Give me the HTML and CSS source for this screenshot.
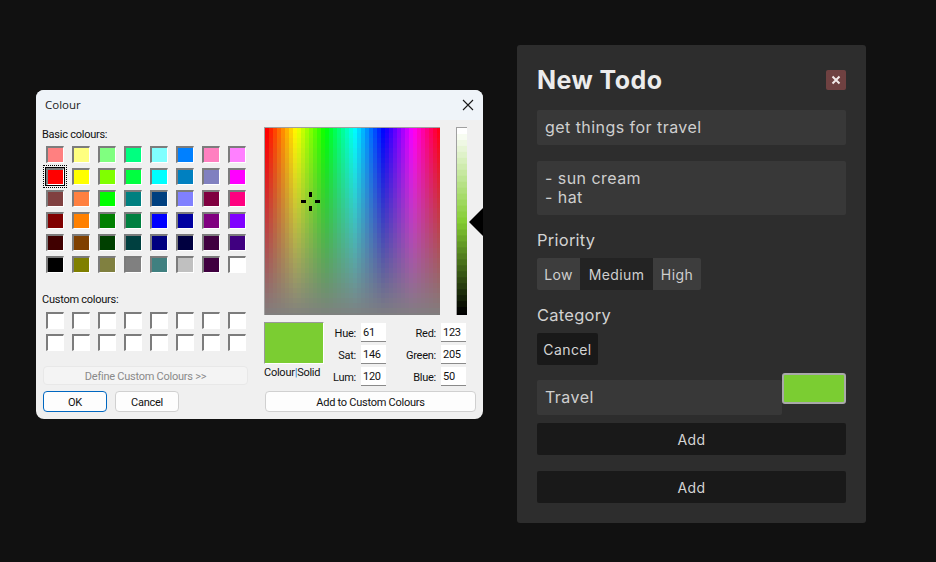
FILE: index.html
```html
<!DOCTYPE html>
<html lang="en">
  <head>
    <meta charset="UTF-8" />
    <meta name="viewport" content="width=device-width, initial-scale=1.0" />
    <title>New Todo</title>
    <link rel="stylesheet" href="styles.css">
  </head>
  <body>
    <div class="panel">
      <div class="panel-head">
        <h1>New Todo</h1>
        <button type="button" class="close-btn">
          <svg width="10" height="10" viewBox="0 0 10 10"><path d="M1.5 1.5l7 7M8.5 1.5l-7 7" stroke="#f2e8e8" stroke-width="2" /></svg>
        </button>
      </div>
      <div class="field field-title">get things for travel</div>
      <div class="field field-notes">- sun cream<br />- hat</div>
      <div class="label label-priority">Priority</div>
      <div class="segments">
        <button type="button" class="seg seg-low">Low</button>
        <button type="button" class="seg seg-medium selected">Medium</button>
        <button type="button" class="seg seg-high">High</button>
      </div>
      <div class="label label-category">Category</div>
      <button type="button" class="dark-btn cancel-btn">Cancel</button>
      <div class="category-row">
        <div class="field field-category">Travel</div>
        <div class="colour-well"></div>
      </div>
      <button type="button" class="dark-btn wide-btn">Add</button>
      <button type="button" class="dark-btn wide-btn second">Add</button>
    </div>

    <div class="dialog">
      <div class="titlebar">
        <span>Colour</span>
        <svg width="12" height="12" viewBox="0 0 12 12"><path d="M1 1l10 10M11 1L1 11" stroke="#1a1a1a" stroke-width="1.1" /></svg>
      </div>
      <div class="dialog-body">
        <div class="col-left">
          <div class="dlg-label">Basic colours:</div>
          <div id="basic-grid" class="swatches basic"></div>
          <div class="dlg-label custom-label">Custom colours:</div>
          <div id="custom-grid" class="swatches custom"></div>
          <button type="button" class="win-btn define-btn" disabled>Define Custom Colours &gt;&gt;</button>
          <div class="ok-row">
            <button type="button" class="win-btn ok-btn">OK</button>
            <button type="button" class="win-btn cancel-win">Cancel</button>
          </div>
        </div>
        <div class="col-right">
          <div class="picker-row">
            <div class="spectrum">
              <canvas id="spectrum" class="spectrum-canvas" width="175" height="187"></canvas>
              <svg class="crosshair" width="19" height="19" viewBox="0 0 19 19"><path d="M8 0h3v5H8zM8 14h3v5H8zM0 8h5v3H0zM14 8h5v3h-5z" /></svg>
            </div>
            <canvas id="lum" class="lum" width="11" height="188"></canvas>
          </div>
          <div class="values-row">
            <div class="preview-box">
              <div class="preview"></div>
              <div class="preview-label">Colour<span class="pipe">|</span>Solid</div>
            </div>
            <div class="values">
              <label>Hue:</label><div class="num">61</div>
              <label>Red:</label><div class="num">123</div>
              <label>Sat:</label><div class="num">146</div>
              <label>Green:</label><div class="num">205</div>
              <label>Lum:</label><div class="num">120</div>
              <label>Blue:</label><div class="num">50</div>
            </div>
          </div>
          <button type="button" class="win-btn add-custom">Add to Custom Colours</button>
        </div>
      </div>
      <div class="lum-arrow"></div>
    </div>
    <script src="script.js"></script>
  </body>
</html>
```

FILE: styles.css
```css
html,
body {
  height: 100%;
}
body {
  margin: 0;
  background-color: #111111;
  overflow: hidden;
  font-family: "Inter", "Noto Sans", sans-serif;
}
button {
  font-family: inherit;
  cursor: pointer;
}

/* todo panel */
.panel {
  box-sizing: border-box;
  width: 349px;
  height: 478px;
  margin: 45px 0 0 517px;
  padding: 20px;
  background-color: #2d2d2d;
  border-radius: 3px;
  color: #d4d4d4;
}
.panel-head {
  display: flex;
  justify-content: space-between;
  align-items: center;
  height: 30px;
  margin-bottom: 15px;
}
h1 {
  margin: 0;
  padding-top: 1px;
  font-size: 25px;
  line-height: 29px;
  font-weight: 700;
  letter-spacing: 0.45px;
  color: #ececec;
}
.close-btn {
  display: flex;
  align-items: center;
  justify-content: center;
  width: 20px;
  height: 20px;
  padding: 0;
  border: none;
  border-radius: 2px;
  background-color: #6f4141;
}
.field {
  box-sizing: border-box;
  padding: 0 8px;
  background-color: #383838;
  border-radius: 2px;
  font-size: 16px;
  letter-spacing: 0.45px;
  color: #cfcfcf;
}
.field-title {
  height: 35px;
  line-height: 35px;
  margin-bottom: 16px;
}
.field-notes {
  height: 54px;
  padding-top: 8px;
  line-height: 19px;
}
.label {
  font-size: 16.5px;
  letter-spacing: 0.25px;
  line-height: 20px;
  color: #d2d2d2;
}
.label-priority {
  margin-top: 15px;
  margin-bottom: 8px;
}
.label-category {
  margin-top: 15px;
  margin-bottom: 8px;
}
.segments {
  display: flex;
}
.seg {
  height: 32px;
  padding: 0;
  border: none;
  background-color: #3d3d3d;
  color: #cfcfcf;
  font-size: 14px;
  letter-spacing: 0.4px;
}
.seg-low {
  width: 43px;
  border-radius: 2px 0 0 2px;
}
.seg-medium {
  width: 73px;
}
.seg-high {
  width: 48px;
  border-radius: 0 2px 2px 0;
}
.seg.selected {
  background-color: #232323;
}
.dark-btn {
  display: block;
  height: 32px;
  padding: 0;
  border: none;
  border-radius: 2px;
  background-color: #191919;
  color: #d4d4d4;
  font-size: 14px;
  letter-spacing: 0.4px;
}
.cancel-btn {
  width: 61px;
}
.category-row {
  display: flex;
  align-items: flex-start;
  margin-top: 8px;
}
.field-category {
  width: 245px;
  height: 35px;
  margin-top: 7px;
  line-height: 35px;
}
.colour-well {
  box-sizing: border-box;
  width: 64px;
  height: 31px;
  border: 2px solid #a9a9a9;
  border-radius: 3px;
  background-color: #7bcd32;
}
.wide-btn {
  width: 100%;
  margin-top: 8px;
}
.wide-btn.second {
  margin-top: 16px;
}

/* colour dialog, floats over the page */
.dialog {
  position: absolute;
  left: 36px;
  top: 90px;
  width: 447px;
  height: 329px;
  background-color: #f0f0f0;
  border-radius: 8px;
  overflow: hidden;
  font-family: "Roboto", "Noto Sans", sans-serif;
  font-size: 11px;
  letter-spacing: -0.25px;
  color: #111111;
}
.titlebar {
  display: flex;
  justify-content: space-between;
  align-items: center;
  box-sizing: border-box;
  height: 30px;
  padding: 0 9px 1px 9px;
  background-color: #eff4f9;
  font-family: "Open Sans", "Noto Sans", sans-serif;
  font-size: 11.5px;
  letter-spacing: 0;
  color: #222222;
}
.dialog-body {
  display: flex;
  gap: 16px;
  padding: 7px 0 0 6px;
}
.col-left {
  width: 206px;
}
.dlg-label {
  height: 14px;
  line-height: 16px;
}
.swatches {
  display: grid;
  grid-template-columns: repeat(8, 18px);
  grid-auto-rows: 17px;
  column-gap: 8px;
  row-gap: 5px;
  margin-left: 4px;
}
.basic {
  margin-top: 5px;
}
.custom {
  margin-top: 6px;
}
.custom-label {
  margin-top: 19px;
}
.swatch {
  position: relative;
  box-sizing: border-box;
  border-top: 2px solid #7c7c7c;
  border-left: 2px solid #7c7c7c;
  border-right: 1px solid #ffffff;
  border-bottom: 1px solid #ffffff;
  background-color: #ffffff;
}
.swatch.current::after {
  content: "";
  position: absolute;
  left: -3px;
  top: -3px;
  right: -2px;
  bottom: -2px;
  border: 1px solid #000000;
  box-shadow: 0 0 0 1px #f0f0f0;
  outline: 1px dotted #000000;
  outline-offset: 1px;
}
.win-btn {
  box-sizing: border-box;
  padding: 2px 0 0;
  border: 1px solid #d0d0d0;
  border-radius: 4px;
  background-color: #fdfdfd;
  font-family: inherit;
  font-size: inherit;
  letter-spacing: inherit;
  color: #111111;
}
.define-btn {
  display: block;
  width: 205px;
  height: 19px;
  margin: 15px 0 0 1px;
  border-color: #e8e8e8;
  background-color: #f4f4f4;
  color: #8a8a8a;
}
.ok-row {
  display: flex;
  gap: 8px;
  margin: 6px 0 0 1px;
}
.ok-btn,
.cancel-win {
  width: 64px;
  height: 21px;
}
.ok-btn {
  border: 1px solid #0067c0;
}
.col-right {
  width: 212px;
}
.picker-row {
  display: flex;
  gap: 16px;
  height: 188px;
}
.spectrum {
  position: relative;
  box-sizing: border-box;
  width: 176px;
  height: 188px;
  border-top: 1px solid #a0a0a0;
  border-left: 1px solid #a0a0a0;
}
canvas {
  display: block;
}
.crosshair {
  position: absolute;
  left: 36px;
  top: 64px;
}
.lum {
  box-sizing: border-box;
  width: 11px;
  height: 188px;
  border-top: 1px solid #a0a0a0;
  border-left: 1px solid #a0a0a0;
}
.lum-arrow {
  position: absolute;
  left: 433px;
  top: 118px;
  width: 14px;
  height: 28px;
  background-color: #000000;
  clip-path: polygon(0 50%, 100% 0, 100% 100%);
}
.values-row {
  display: flex;
  margin-top: 7px;
}
.preview-box {
  width: 66px;
}
.preview {
  box-sizing: border-box;
  width: 60px;
  height: 42px;
  border-top: 1px solid #999999;
  border-left: 1px solid #999999;
  border-right: 1px solid #ffffff;
  border-bottom: 1px solid #ffffff;
  background-color: #7bcd32;
}
.preview-label {
  margin-top: 2px;
  line-height: 14px;
  white-space: nowrap;
}
.pipe {
  color: #2b7fd0;
}
.values {
  display: grid;
  grid-template-columns: 26px 25px 45px 25px;
  grid-auto-rows: 19px;
  column-gap: 5px;
  row-gap: 3px;
  margin-top: 1px;
}
.values label {
  text-align: right;
  line-height: 21px;
}
.num {
  box-sizing: border-box;
  padding-left: 2px;
  line-height: 20px;
  background-color: #ffffff;
  border-bottom: 1px solid #8a8a8a;
}
.add-custom {
  display: block;
  width: 211px;
  height: 21px;
  margin: 5px 0 0 1px;
}
```

FILE: script.js
```js
const basicColours = [
  "#ff8080", "#ffff80", "#80ff80", "#00ff80", "#80ffff", "#0080ff", "#ff80c0", "#ff80ff",
  "#ff0000", "#ffff00", "#80ff00", "#00ff40", "#00ffff", "#0080c0", "#8080c0", "#ff00ff",
  "#804040", "#ff8040", "#00ff00", "#008080", "#004080", "#8080ff", "#800040", "#ff0080",
  "#800000", "#ff8000", "#008000", "#008040", "#0000ff", "#0000a0", "#800080", "#8000ff",
  "#400000", "#804000", "#004000", "#004040", "#000080", "#000040", "#400040", "#400080",
  "#000000", "#808000", "#808040", "#808080", "#408080", "#c0c0c0", "#400040", "#ffffff",
];

const basicGrid = document.getElementById("basic-grid");
basicColours.forEach((colour, i) => {
  const swatch = document.createElement("div");
  swatch.className = i === 8 ? "swatch current" : "swatch";
  swatch.style.backgroundColor = colour;
  basicGrid.appendChild(swatch);
});

const customGrid = document.getElementById("custom-grid");
for (let i = 0; i < 16; i++) {
  const swatch = document.createElement("div");
  swatch.className = "swatch";
  customGrid.appendChild(swatch);
}

// The native picker paints in coarse blocks, so draw it block by block
const spectrum = document.getElementById("spectrum").getContext("2d");
for (let y = 0; y < 187; y += 5) {
  for (let x = 0; x < 175; x += 4) {
    const hue = (x / 175) * 360;
    const sat = 100 - (y / 187) * 100;
    spectrum.fillStyle = `hsl(${hue}, ${sat}%, 50%)`;
    spectrum.fillRect(x, y, 4, 5);
  }
}

const lum = document.getElementById("lum").getContext("2d");
for (let y = 0; y < 188; y += 6) {
  const light = 100 - (y / 182) * 100;
  lum.fillStyle = `hsl(88, 61%, ${light}%)`;
  lum.fillRect(0, y, 11, 6);
}
```
